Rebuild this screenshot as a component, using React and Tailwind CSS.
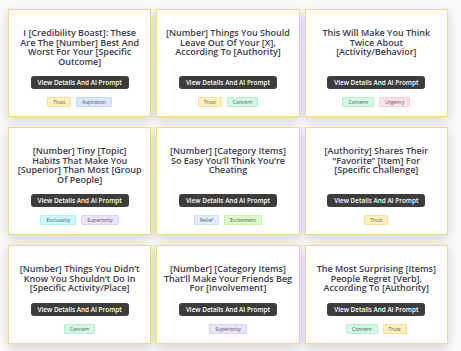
import React from "react";

const TAG_STYLES = {
  Trust: "bg-[#fdefbf] border-[#f8df92]",
  Aspiration: "bg-[#dce7fd] border-[#c5d6fb]",
  Concern: "bg-[#d3f8e4] border-[#b5efd0]",
  Urgency: "bg-[#fde1e7] border-[#f9cdd7]",
  Exclusivity: "bg-[#cdf8fc] border-[#b1eef6]",
  Superiority: "bg-[#ebe3fd] border-[#dccffb]",
  Relief: "bg-[#e1edfb] border-[#cddff6]",
  Excitement: "bg-[#dcfbc9] border-[#c5f3ab]",
};

// titles kept as lines so the wrapping matches the original layout
const cards = [
  {
    lines: ["I [Credibility Boast]: These", "Are The [Number] Best And", "Worst For Your [Specific", "Outcome]"],
    tags: ["Trust", "Aspiration"],
  },
  {
    lines: ["[Number] Things You Should", "Leave Out Of Your [X],", "According To [Authority]"],
    tags: ["Trust", "Concern"],
  },
  {
    lines: ["This Will Make You Think", "Twice About", "[Activity/Behavior]"],
    tags: ["Concern", "Urgency"],
  },
  {
    lines: ["[Number] Tiny [Topic]", "Habits That Make You", "[Superior] Than Most [Group", "Of People]"],
    tags: ["Exclusivity", "Superiority"],
  },
  {
    lines: ["[Number] [Category Items]", "So Easy You\u2019ll Think You\u2019re", "Cheating"],
    tags: ["Relief", "Excitement"],
  },
  {
    lines: ["[Authority] Shares Their", "\u201cFavorite\u201d [Item] For", "[Specific Challenge]"],
    tags: ["Trust"],
  },
  {
    lines: ["[Number] Things You Didn\u2019t", "Know You Shouldn\u2019t Do In", "[Specific Activity/Place]"],
    tags: ["Concern"],
  },
  {
    lines: ["[Number] [Category Items]", "That\u2019ll Make Your Friends Beg", "For [Involvement]"],
    tags: ["Superiority"],
  },
  {
    lines: ["The Most Surprising [Items]", "People Regret [Verb],", "According To [Authority]"],
    tags: ["Concern", "Trust"],
  },
  {
    lines: ["[Number] Mistakes Everyone", "Makes With [Topic]"],
    tags: ["Concern"],
  },
  {
    lines: ["Why [Authority] Swears", "By [Item]"],
    tags: ["Trust"],
  },
  {
    lines: ["[Number] Secrets [Group]", "Won\u2019t Tell You"],
    tags: ["Exclusivity"],
  },
];

const HeadlineCard = ({ lines, tags }) => {
  return (
    <div className="flex flex-col bg-white border border-[#f6d783] shadow-[0_3px_10px_rgba(0,0,0,0.16)] px-[8px] pt-[18px] pb-[9px]">
      <h3 className="flex-1 flex flex-col items-center text-center text-[9px] leading-[9.5px] font-semibold text-[#3a3a4c]">
        {lines.map((line, index) => (
          <span key={`line_${index}`} className="whitespace-nowrap">
            {line}
          </span>
        ))}
      </h3>
      <div className="flex justify-center mt-[10px]">
        <button className="h-[13px] px-[7px] rounded-[3px] bg-[#3c3c3c] text-white text-[6.4px] leading-[13px] font-semibold whitespace-nowrap">
          View Details And AI Prompt
        </button>
      </div>
      <div className="flex justify-center gap-[5px] mt-[8px]">
        {tags.map((tag, index) => (
          <span
            key={`tag_${index}`}
            className={`h-[10px] px-[5px] border rounded-[1px] text-[5px] leading-[9px] text-[#555] ${TAG_STYLES[tag]}`}
          >
            {tag}
          </span>
        ))}
      </div>
    </div>
  );
};

export default function App() {
  return (
    <div
      className="min-h-screen bg-[#fafafb] pl-[8px] pr-[13px] pt-[9px] pb-4"
      style={{ fontFamily: '"Open Sans", "Noto Sans", sans-serif' }}
    >
      <div className="grid grid-cols-3 gap-x-[5px] gap-y-[10px]">
        {cards.map((card, index) => (
          <HeadlineCard key={`card_${index}`} lines={card.lines} tags={card.tags} />
        ))}
      </div>
    </div>
  );
}
